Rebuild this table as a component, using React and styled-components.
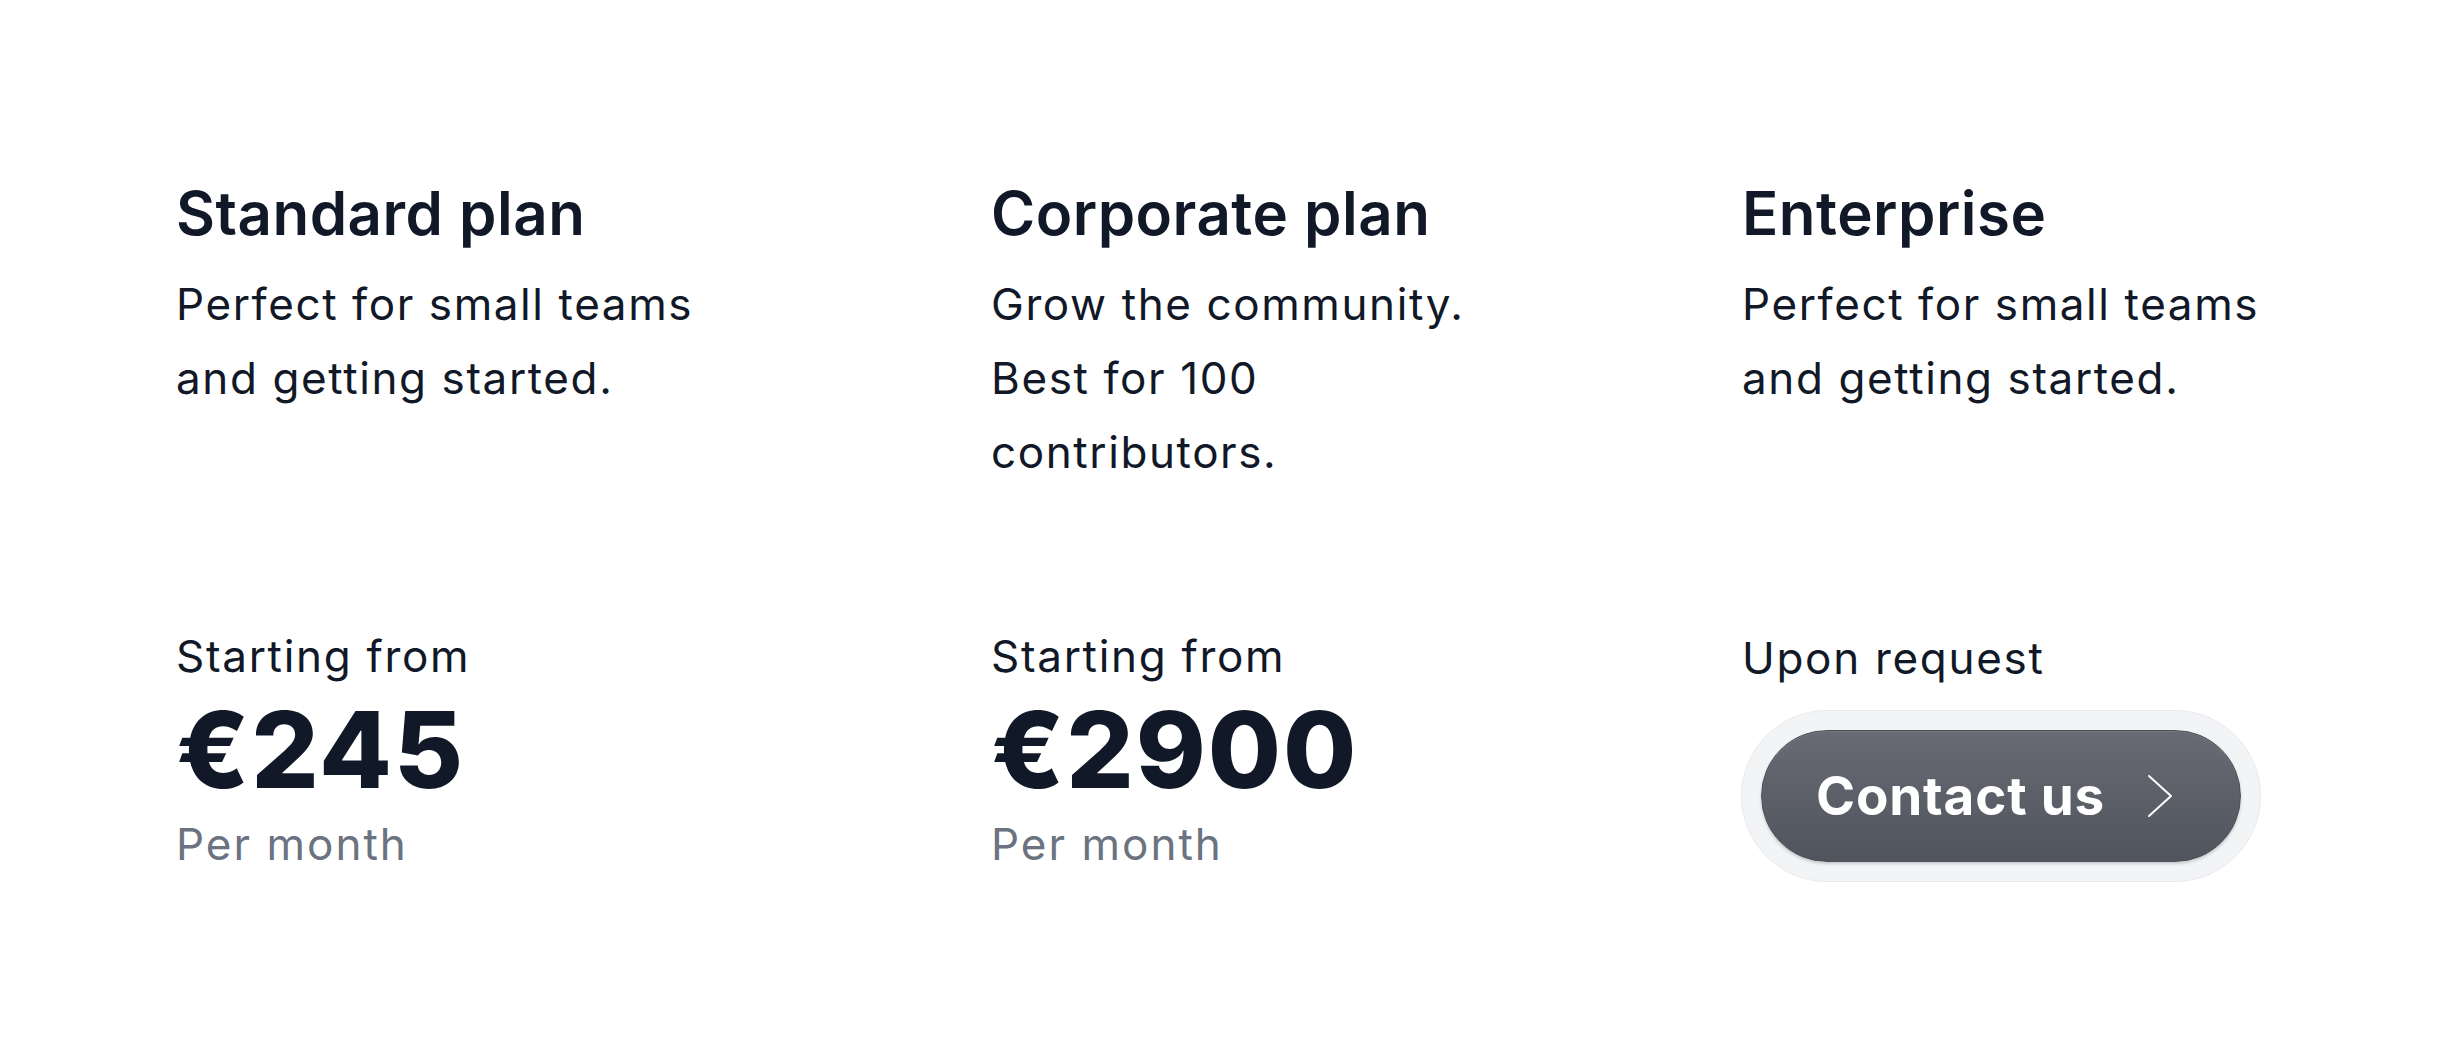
import React from 'react'
import styled, { createGlobalStyle } from 'styled-components'

const GlobalStyle = createGlobalStyle`
  html, body {
    margin: 0;
    padding: 0;
    background: #ffffff;
  }
  body {
    font-family: Inter, "Noto Sans", "Liberation Sans", sans-serif;
    color: #111827;
    -webkit-font-smoothing: antialiased;
  }
`

const plans = [
  {
    name: 'Standard plan',
    description: 'Perfect for small teams and getting started.',
    price: '€245',
    width: 560,
  },
  {
    name: 'Corporate plan',
    description: 'Grow the community. Best for 100 contributors.',
    price: '€2900',
    width: 496,
  },
  {
    name: 'Enterprise',
    description: 'Perfect for small teams and getting started.',
    width: 537,
  },
]

export default function App() {
  return (
    <>
      <GlobalStyle />
      <Section>
        {plans.map(plan => (
          <Card key={plan.name} $width={plan.width}>
            <div>
              <Title>{plan.name}</Title>
              <Description>{plan.description}</Description>
            </div>
            {plan.price ? (
              <div>
                <Label>Starting from</Label>
                <Price>{plan.price}</Price>
                <Period>Per month</Period>
              </div>
            ) : (
              <div>
                <Label $request>Upon request</Label>
                <Ring>
                  <ContactButton>
                    Contact us
                    <svg width="26" height="44" viewBox="0 0 26 44" fill="none">
                      <path d="M2 2 L24 22 L2 42" stroke="#ffffff" strokeWidth="2" strokeLinecap="round" strokeLinejoin="round" />
                    </svg>
                  </ContactButton>
                </Ring>
              </div>
            )}
          </Card>
        ))}
      </Section>
    </>
  )
}

const Section = styled.section`
  display: flex;
  justify-content: space-between;
  align-items: stretch;
  padding: 177px 178px 160px 176px;
`

const Card = styled.div`
  width: ${p => p.$width}px;
  min-height: 705px;
  display: flex;
  flex-direction: column;
  justify-content: space-between;
`

const Title = styled.h3`
  margin: 0;
  font-size: 60px;
  line-height: 72px;
  font-weight: 600;
  letter-spacing: 0.5px;
`

const Description = styled.p`
  margin: 18px 0 0;
  font-size: 44px;
  line-height: 74px;
  font-weight: 400;
  letter-spacing: 1.6px;
`

const Label = styled.p`
  margin: 0 0 ${p => (p.$request ? '19px' : '0')};
  font-size: 44px;
  line-height: 66px;
  font-weight: 400;
  letter-spacing: 1.7px;
`

const Price = styled.p`
  margin: 0;
  font-size: 106px;
  line-height: 1.15;
  font-weight: 800;
  letter-spacing: 1.9px;
`

const Period = styled.p`
  margin: 0 0 5px;
  font-size: 44px;
  line-height: 66px;
  color: #6b7280;
  letter-spacing: 2px;
`

const Ring = styled.div`
  display: inline-flex;
  padding: 19px;
  border-radius: 999px;
  background: #f3f4f6;
  border: 1px solid #e9eaee;
  margin-left: -1px;
`

const ContactButton = styled.button`
  display: flex;
  align-items: center;
  gap: 42px;
  height: 132px;
  padding: 0 67px 0 54px;
  border-radius: 999px;
  border: 1px solid #4b4f58;
  background: linear-gradient(180deg, #686b74 0%, #50545d 100%);
  box-shadow: inset 0 1px 0 rgba(255, 255, 255, 0.1), 0 2px 3px rgba(17, 24, 39, 0.18);
  color: #ffffff;
  font-family: Inter, "Noto Sans", "Liberation Sans", sans-serif;
  font-size: 53px;
  font-weight: 700;
  letter-spacing: 0.8px;
  cursor: pointer;
`
